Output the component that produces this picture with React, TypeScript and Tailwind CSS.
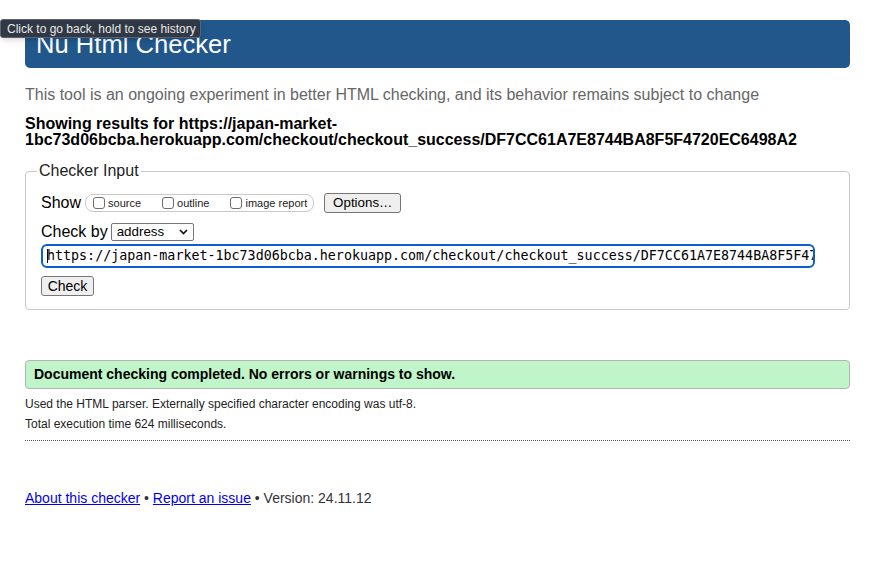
import React from 'react';

const url =
   'https://japan-market-1bc73d06bcba.herokuapp.com/checkout/checkout_success/DF7CC61A7E8744BA8F5F4720EC6498A2';

const Box = ({ label }: { label: string }) => (
   <label className="flex items-center">
      <input
         type="checkbox"
         className="appearance-none w-[12px] h-[12px] border border-[#6e6e6e] rounded-[3px] bg-white m-0"
      />
      <span className="ml-[3px] text-[11px] leading-[12px] text-[#222]">{label}</span>
   </label>
);

const App = () => {
   return (
      <div className="relative min-h-screen bg-white px-[25px] pt-[20px] font-['Liberation_Sans',Arial,sans-serif] text-black">
         {/* browser tooltip over the header */}
         <div className="absolute left-0 top-[19px] h-[19px] w-[201px] flex items-center pl-[6px] bg-[#313845] border border-[#5d6471] rounded-[3px] shadow-md text-[12px] text-[#e8e8e8] whitespace-nowrap z-10">
            Click to go back, hold to see history
         </div>

         <header className="h-[48px] bg-[#21578a] rounded-[5px] pl-[11px] text-white text-[25.6px] leading-[48px]">
            Nu Html Checker
         </header>

         <p className="mt-[18px] text-[16px] leading-[18px] text-[#666]">
            This tool is an ongoing experiment in better HTML checking, and its behavior remains subject
            to change
         </p>

         <p className="mt-[12px] text-[16px] leading-[16px] font-bold">
            Showing results for https://japan-market-
            <br />
            1bc73d06bcba.herokuapp.com/checkout/checkout_success/DF7CC61A7E8744BA8F5F4720EC6498A2
         </p>

         <fieldset className="mt-[14px] border border-[#c8c8c8] rounded-[4px] px-[15px] pt-[13px] pb-[13px]">
            <legend className="-ml-[4px] px-[2px] text-[16px] leading-[18px] text-[#222]">
               Checker Input
            </legend>

            <div className="flex items-center h-[20px]">
               <span className="text-[16px] leading-[18px]">Show</span>
               <div className="ml-[4px] h-[18px] flex items-center gap-[21px] border border-[#c8c8c8] rounded-[8px] pl-[7px] pr-[6px]">
                  <Box label="source" />
                  <Box label="outline" />
                  <Box label="image report" />
               </div>
               <button className="ml-[10px] h-[20px] w-[77px] bg-[#efefef] border border-[#767676] rounded-[3px] text-[13.33px] leading-[18px]">
                  Options…
               </button>
            </div>

            <div className="mt-[10px] flex items-center h-[18px]">
               <span className="text-[16px] leading-[18px]">Check by</span>
               <div className="ml-[3px] w-[83px] h-[18px] flex items-center justify-between border border-[#767676] rounded-[2px] bg-white pl-[5px] pr-[5px] text-[13.33px] leading-[16px]">
                  <span>address</span>
                  <svg width="9" height="6" viewBox="0 0 9 6">
                     <polyline points="1,1 4.5,4.6 8,1" fill="none" stroke="#111" strokeWidth="1.6" />
                  </svg>
               </div>
            </div>

            {/* address field, shown focused */}
            <div className="relative mt-[3px] w-[774px] h-[24px] border-2 border-[#0b5ed0] rounded-[6px] pl-[4px] pr-[2px] overflow-hidden whitespace-nowrap text-[13.33px] leading-[20px] font-['DejaVu_Sans_Mono',monospace] text-black">
               {url}
               <span className="absolute left-[4px] top-[3px] w-[1px] h-[14px] bg-black" />
            </div>

            <button className="mt-[8px] h-[20px] w-[53px] bg-[#efefef] border border-[#767676] rounded-[3px] text-[14px] leading-[18px] block">
               Check
            </button>
         </fieldset>

         <div className="mt-[50px] h-[29px] flex items-center pl-[8px] bg-[#bff5c9] border border-[#b4b4b4] rounded-[4px] text-[14px] font-bold">
            Document checking completed. No errors or warnings to show.
         </div>

         <p className="mt-[5px] text-[12px] leading-[20px] text-[#222]">
            Used the HTML parser. Externally specified character encoding was utf-8.
         </p>
         <p className="text-[12px] leading-[20px] text-[#222]">Total execution time 624 milliseconds.</p>

         <div className="mt-[6px] border-t border-dotted border-[#555]" />

         <p className="mt-[47px] text-[14px] leading-[20px] text-[#333]">
            <a href="#" className="text-[#0000ee] underline">
               About this checker
            </a>{' '}
            •{' '}
            <a href="#" className="text-[#0000ee] underline">
               Report an issue
            </a>{' '}
            • Version: 24.11.12
         </p>
      </div>
   );
};

export default App;
